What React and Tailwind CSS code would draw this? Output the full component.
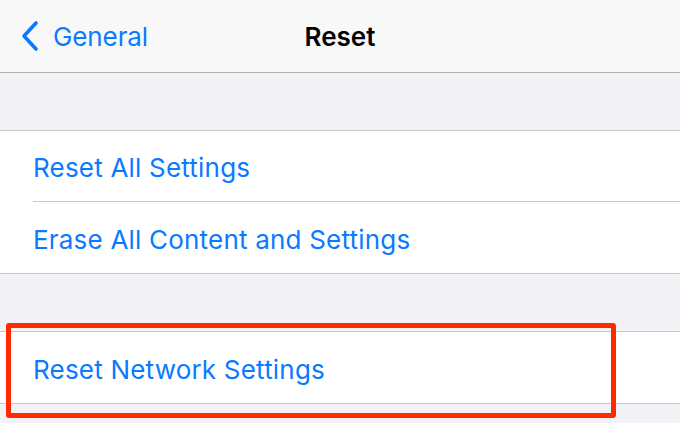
import React from 'react';

function Row({ label, last }) {
  return (
    <div className="h-[71px] bg-white pl-[33px] flex">
      <div className={`flex-1 flex items-center pt-[3px] ${last ? '' : 'border-b border-[#c8c7cc]'}`}>
        <span className="text-[26px] text-[#0a7aff] tracking-[0.2px]">{label}</span>
      </div>
    </div>
  );
}

export default function App() {
  return (
    <div className="w-[680px] h-[423px] overflow-hidden bg-[#f2f2f7] font-['Inter',sans-serif] relative">
      <div className="h-[73px] bg-[#f8f8f8] border-b border-[#b2b2b2] flex items-center relative">
        <div className="flex items-center pl-[20px] text-[#0a7aff]">
          <svg width="20" height="32" viewBox="0 0 20 32" className="mr-[13px]">
            <path d="M16 3 L4 16 L16 29" fill="none" stroke="#0a7aff" strokeWidth="3.6" strokeLinecap="round" strokeLinejoin="round" />
          </svg>
          <span className="text-[26px] tracking-[-0.1px]">General</span>
        </div>
        <span className="absolute left-0 right-0 text-center text-[26px] font-semibold text-black">Reset</span>
      </div>
      <div className="h-[57px]" />
      <div className="border-t border-b border-[#c8c7cc]">
        <Row label="Reset All Settings" />
        <Row label="Erase All Content and Settings" last />
      </div>
      <div className="h-[57px]" />
      <div className="border-t border-b border-[#c8c7cc]">
        <Row label="Reset Network Settings" last />
      </div>
      <div className="absolute left-[6px] top-[323px] w-[610px] h-[95px] border-[5px] border-[#ff2a00] rounded-[3px]" />
    </div>
  );
}
